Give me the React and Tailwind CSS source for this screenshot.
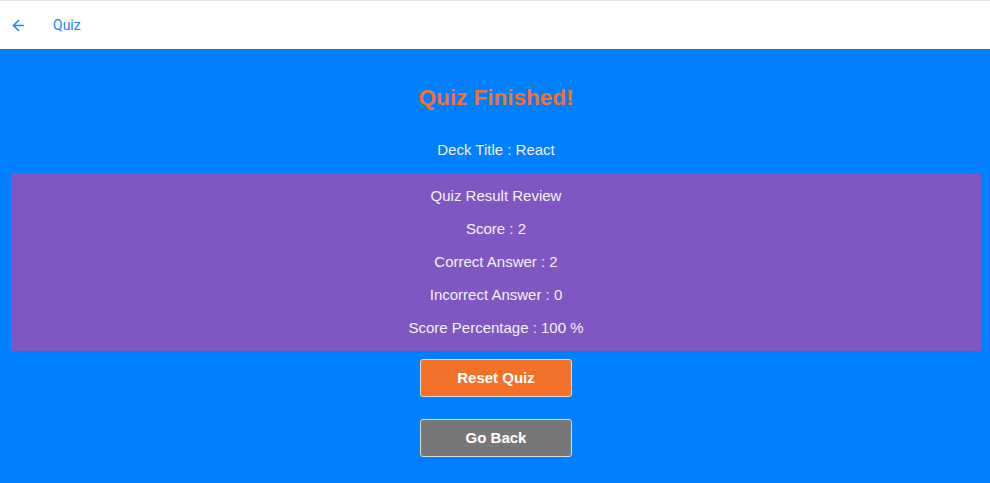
import { ArrowLeft } from "lucide-react";

const rows = [
  "Quiz Result Review",
  "Score : 2",
  "Correct Answer : 2",
  "Incorrect Answer : 0",
  "Score Percentage : 100 %",
];

export default function App() {
  return (
    <div className="w-[990px] h-[483px] flex flex-col bg-[#007fff] font-['Liberation_Sans',Arial,sans-serif] overflow-hidden">
      <header className="h-[49px] shrink-0 bg-white border-t border-[#e3e3e3] flex items-center pl-[10px] font-['Roboto',sans-serif]">
        <ArrowLeft className="w-[17px] h-[17px] text-[#1a86f5]" strokeWidth={2.2} />
        <span className="ml-[26px] text-[14px] text-[#1a86f5]">Quiz</span>
      </header>

      <main className="flex flex-col items-center pl-[2px] text-[#f3f3f3]">
        <h1 className="mt-[36px] h-[26px] leading-[26px] text-[22.5px] font-bold text-[#f4712b]">
          Quiz Finished!
        </h1>
        <p className="mt-[30px] h-[18px] leading-[18px] text-[15px]">Deck Title : React</p>

        <section className="mt-[14px] w-[970px] bg-[#7e57c2] pt-[7px] pb-[6px] flex flex-col items-center">
          {rows.map((r) => (
            <div key={r} className="h-[33px] flex items-center text-[15px]">
              {r}
            </div>
          ))}
        </section>

        <button className="mt-[8px] w-[152px] h-[38px] rounded-[3px] border border-[#d9d9d9] bg-[#f47129] text-[15px] font-bold text-white">
          Reset Quiz
        </button>
        <button className="mt-[22px] w-[152px] h-[38px] rounded-[3px] border border-[#d9d9d9] bg-[#777777] text-[15px] font-bold text-white">
          Go Back
        </button>
      </main>
    </div>
  );
}
